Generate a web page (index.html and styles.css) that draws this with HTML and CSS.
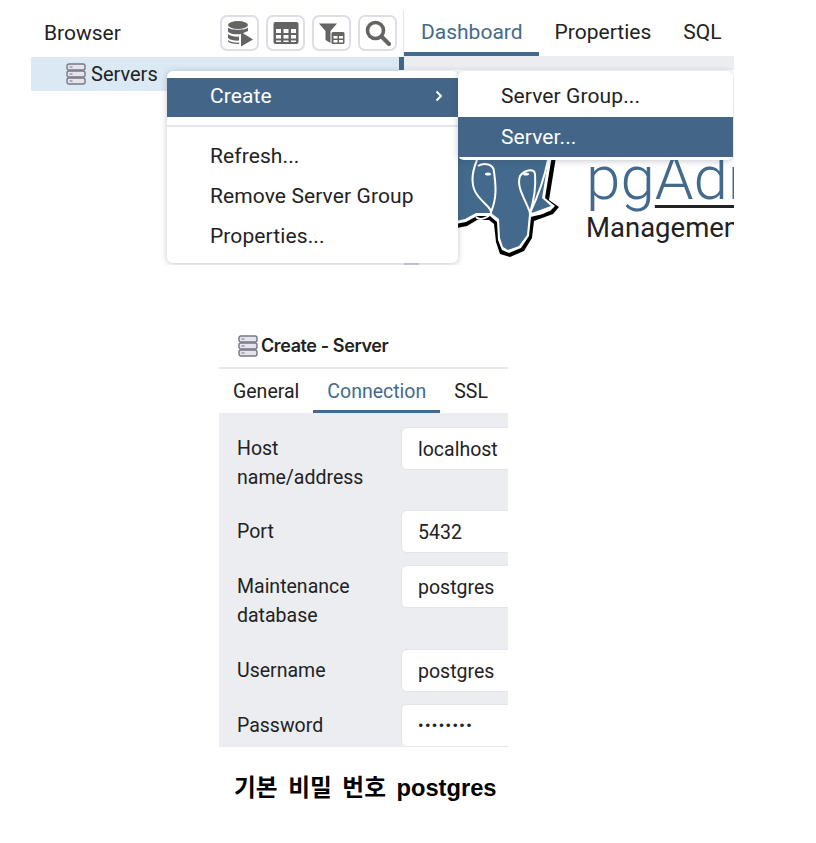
FILE: index.html
```html
<!DOCTYPE html>
<html>
  <head>
    <title>pgAdmin - Create Server</title>
    <link rel="stylesheet" href="styles.css">
  </head>
  <body>
    <svg class="defs" width="0" height="0">
      <symbol id="server-icon" viewBox="0 0 20 22">
        <rect x="1" y="1" width="18" height="6" rx="2" fill="#e4e4ea" stroke="#77778a" stroke-width="1.4"/>
        <rect x="1" y="8" width="18" height="6" rx="2" fill="#e4e4ea" stroke="#77778a" stroke-width="1.4"/>
        <rect x="1" y="15" width="18" height="6" rx="2" fill="#e4e4ea" stroke="#77778a" stroke-width="1.4"/>
        <path d="M3.500 4h3M3.500 11h3M3.500 18h3" stroke="#77778a" stroke-width="1"/>
      </symbol>
    </svg>

    <div class="app">
      <div class="browser-pane">
        <div class="browser-head">
          <span class="browser-title">Browser</span>
          <div class="toolbar">
            <button class="tool-btn">
              <svg width="28" height="28" viewBox="0 0 28 28">
                <ellipse cx="12" cy="6" rx="10" ry="4" fill="#646464"/>
                <path d="M2 8.500c2 3 18 3 20 0v3.500l-7 3c-4 .8-11 .2-13-2.500z" fill="#646464"/>
                <path d="M2 15c2 2 7 2.800 11 2.600v4c-4 .2-9-.4-11-2.600z" fill="#646464"/>
                <path d="M2 21c2 2 7 2.800 11 2.600v1.400c-5 .2-11-1-11-3z" fill="#646464"/>
                <path d="M15 13l12 7.500-12 7z" fill="#646464"/>
              </svg>
            </button>
            <button class="tool-btn">
              <svg width="26" height="24" viewBox="0 0 26 24">
                <rect x="0.500" y="1" width="25" height="22" rx="2" fill="#646464"/>
                <path d="M3 8h5v4H3zM10.500 8h5v4h-5zM18 8h5v4h-5zM3 14h5v3.500H3zM10.500 14h5v3.500h-5zM18 14h5v3.500h-5zM3 19.500h5V21H3zM10.500 19.500h5V21h-5zM18 19.500h5V21h-5z" fill="#fff"/>
              </svg>
            </button>
            <button class="tool-btn">
              <svg width="26" height="24" viewBox="0 0 26 24">
                <path d="M0 2.500h18l-6.500 7.500v12l-5-3v-9z" fill="#646464"/>
                <rect x="12.500" y="11" width="13" height="12" rx="1.500" fill="#646464"/>
                <path d="M14.500 15h4v2.500h-4zM20 15h4v2.500h-4zM14.500 19h4v2.500h-4zM20 19h4v2.500h-4z" fill="#fff"/>
              </svg>
            </button>
            <button class="tool-btn">
              <svg width="26" height="26" viewBox="0 0 26 26">
                <circle cx="10.500" cy="10.500" r="8" fill="none" stroke="#646464" stroke-width="3.600"/>
                <path d="M16.500 16.500l7.500 7.500" stroke="#646464" stroke-width="4" stroke-linecap="round"/>
              </svg>
            </button>
          </div>
        </div>
        <div class="tree">
          <div class="tree-row">
            <svg class="server-icon"><use href="#server-icon"/></svg>
            <span>Servers</span>
          </div>
          <div class="splitter"></div>
        </div>
      </div>

      <div class="main-pane">
        <div class="tabs">
          <span class="tab active">Dashboard</span>
          <span class="tab">Properties</span>
          <span class="tab">SQL</span>
        </div>
        <div class="tab-strip"></div>
        <div class="welcome">
          <svg class="elephant" width="102" height="102" viewBox="458 157 102 102">
            <path d="M456 157H556L549 200L559 207L553 214L534 221L532 238L524 251L510 257L500 254L496 242L494 224L489 220L477 220L467 226L456 228Z" fill="#000"/>
            <path d="M456 155H552L545 198L555 206L550 211L531 217L529 236L521 248L509 253L502 250L498 240L497 222L490 216L477 216L466 222L456 224Z" fill="#fff"/>
            <path d="M456 155H549L542 198L551 206L529 214L527 235L519 246L508 250L503 247L500 238L499 219L491 213L476 213L465 219L456 221Z" fill="#436a8c"/>
            <path d="M477 160C472 172 470 186 478 196C484 204 492 208 491 213C488 218 480 221 476 217M478 166C484 162 494 164 494 172C496 186 497 198 491 212" fill="none" stroke="#fff" stroke-width="2"/>
            <path d="M548 160C544 180 538 196 530 213C536 216 544 214 549 208M520 176C524 170 534 168 535 174C536 186 534 200 530 213C526 200 516 188 520 176Z" fill="none" stroke="#fff" stroke-width="2"/>
            <ellipse cx="488" cy="174" rx="3" ry="1.500" fill="#fff"/>
            <ellipse cx="526" cy="174" rx="3" ry="1.500" fill="#fff"/>
          </svg>
          <div class="brand">
            <div class="brand-name">pg<span class="brand-admin">Admin</span></div>
            <div class="brand-sub">Management Tools for PostgreSQL</div>
          </div>
          <span class="scroll-nub"></span>
        </div>
      </div>

      <div class="menu">
        <div class="menu-item selected">
          Create
          <svg class="chevron" width="8" height="12" viewBox="0 0 8 12">
            <path d="M1.500 1.500L6 6l-4.500 4.500" fill="none" stroke="#fff" stroke-width="2"/>
          </svg>
        </div>
        <div class="menu-sep"></div>
        <div class="menu-item">Refresh...</div>
        <div class="menu-item">Remove Server Group</div>
        <div class="menu-item">Properties...</div>
      </div>
      <div class="menu submenu">
        <div class="menu-item">Server Group...</div>
        <div class="menu-item selected">Server...</div>
      </div>
    </div>

    <div class="dialog">
      <div class="dialog-title">
        <svg class="server-icon"><use href="#server-icon"/></svg>
        <span>Create - Server</span>
      </div>
      <div class="dialog-tabs">
        <span class="dialog-tab">General</span>
        <span class="dialog-tab active">Connection</span>
        <span class="dialog-tab">SSL</span>
      </div>
      <div class="form">
        <div class="form-row">
          <label>Host name/address</label>
          <input type="text" value="localhost" readonly>
        </div>
        <div class="form-row">
          <label>Port</label>
          <input type="text" value="5432" readonly>
        </div>
        <div class="form-row tall">
          <label>Maintenance database</label>
          <input type="text" value="postgres" readonly>
        </div>
        <div class="form-row">
          <label>Username</label>
          <input type="text" value="postgres" readonly>
        </div>
        <div class="form-row">
          <label>Password</label>
          <input class="password" type="text" value="••••••••" readonly>
        </div>
      </div>
    </div>

    <p class="caption">기본 비밀 번호 postgres</p>
  </body>
</html>
```

FILE: styles.css
```css
* {
  box-sizing: border-box;
}

body {
  margin: 0;
  background: white;
  color: #222;
  font-family: Roboto, 'Noto Sans', sans-serif;
}

.defs {
  position: absolute;
}

.app {
  position: relative;
  display: flex;
  width: 703px;
  height: 255px;
  margin: 10px 0 0 31px;
  overflow: hidden;
}

/* browser tree */

.browser-pane {
  width: 373px;
  flex-shrink: 0;
}

.browser-head {
  display: flex;
  align-items: center;
  justify-content: space-between;
  height: 47px;
  padding: 0 6px 1px 13px;
  border-right: 1px solid #e4e6ea;
}

.browser-title {
  font-size: 21px;
}

.toolbar {
  display: flex;
  gap: 7px;
}

.tool-btn {
  display: flex;
  align-items: center;
  justify-content: center;
  width: 39px;
  height: 36px;
  padding: 0;
  background: white;
  border: 2px solid #dcdfe6;
  border-radius: 7px;
}

.tree {
  display: flex;
  align-items: flex-start;
}

.tree-row {
  display: flex;
  flex: 1;
  align-items: center;
  gap: 5px;
  height: 34px;
  padding-left: 35px;
  background: #dbe9f4;
  font-size: 20px;
}

.server-icon {
  width: 20px;
  height: 22px;
  flex-shrink: 0;
}

.splitter {
  width: 5px;
  height: 13px;
  background: #436688;
}

/* dashboard */

.main-pane {
  flex: 1;
  min-width: 0;
}

.tabs {
  display: flex;
  height: 46px;
}

.tab {
  display: flex;
  align-items: center;
  height: 46px;
  padding: 0 16px 2px;
  font-size: 21px;
}

.tab:first-child {
  padding-left: 17px;
}

.tab.active {
  color: #436a8c;
  border-bottom: 4px solid #436a8c;
  padding-top: 2px;
  padding-bottom: 0;
}

.tab-strip {
  height: 14px;
  background: #ebedf1;
}

.welcome {
  position: relative;
  display: flex;
  align-items: flex-start;
  height: 195px;
  padding: 87px 0 0 54px;
  overflow: hidden;
}

.elephant {
  flex-shrink: 0;
  margin-right: 26px;
}

.brand {
  white-space: nowrap;
  margin-top: -9px;
}

.brand-name {
  height: 60px;
  color: #436a8c;
  font-size: 62px;
  font-weight: 300;
  line-height: 60px;
}

.brand-admin {
  text-decoration: underline 3px #222;
  text-underline-offset: 6px;
}

.brand-sub {
  font-size: 27.500px;
  line-height: 40px;
}

.scroll-nub {
  position: absolute;
  left: 0;
  bottom: 0;
  width: 15px;
  height: 3px;
  background: #d5d8df;
}

/* context menus */

.menu {
  position: absolute;
  top: 61px;
  left: 136px;
  width: 291px;
  height: 192px;
  padding-top: 7px;
  background: white;
  border-radius: 6px;
  box-shadow: 0 1px 6px rgba(60, 70, 90, 0.3);
  font-size: 21px;
  letter-spacing: 0.1px;
}

.submenu {
  left: 427px;
  width: 275px;
  height: 89px;
  padding-top: 6px;
}

.menu-item {
  display: flex;
  align-items: center;
  justify-content: space-between;
  height: 40px;
  padding: 0 15px 0 43px;
}

.menu-item.selected {
  background: #436688;
  color: white;
}

.menu > .menu-item:first-child {
  padding-bottom: 2px;
}

.menu > .menu-item.selected:first-child {
  height: 39px;
  padding-bottom: 3px;
}

.menu-sep {
  height: 2px;
  margin: 8px 0 9px;
  background: #e4e6ee;
}

/* create server dialog */

.dialog {
  width: 289px;
  margin: 65px 0 0 219px;
}

.dialog-title {
  display: flex;
  align-items: center;
  gap: 3px;
  height: 39px;
  padding: 0 0 6px 19px;
  border-bottom: 2px solid #e6e8ec;
  font-family: Inter, Roboto, sans-serif;
  font-size: 18px;
  font-weight: 600;
  letter-spacing: -0.4px;
}

.dialog-tabs {
  display: flex;
  height: 44px;
}

.dialog-tab {
  display: flex;
  align-items: center;
  padding: 0 14px;
  font-size: 19.500px;
}

.dialog-tab.active {
  color: #436a8c;
  border-bottom: 3px solid #436a8c;
  padding-top: 3px;
}

.form {
  height: 334px;
  padding: 14px 0 0 18px;
  background: #ebedf1;
  overflow: hidden;
}

.form-row {
  display: flex;
  align-items: flex-start;
  margin-bottom: 12px;
}

.form-row.tall {
  margin-bottom: 13px;
}

.form-row label {
  width: 164px;
  flex-shrink: 0;
  padding: 7px 20px 6px 0;
  font-size: 19.500px;
  line-height: 29px;
}

.form-row input {
  width: 200px;
  height: 43px;
  flex-shrink: 0;
  padding: 1px 16px 0;
  background: white;
  border: 1px solid #e3e5ea;
  border-radius: 6px;
  color: #222;
  font-family: Roboto, sans-serif;
  font-size: 19.500px;
  outline: none;
}

.form-row .password {
  font-size: 15px;
  font-weight: 700;
  letter-spacing: 1.500px;
}

.caption {
  margin: 22px 0 0 234px;
  color: black;
  font-family: 'Liberation Sans', 'Noto Sans CJK KR', sans-serif;
  font-size: 23.700px;
  font-weight: 700;
  word-spacing: 4px;
}
```
